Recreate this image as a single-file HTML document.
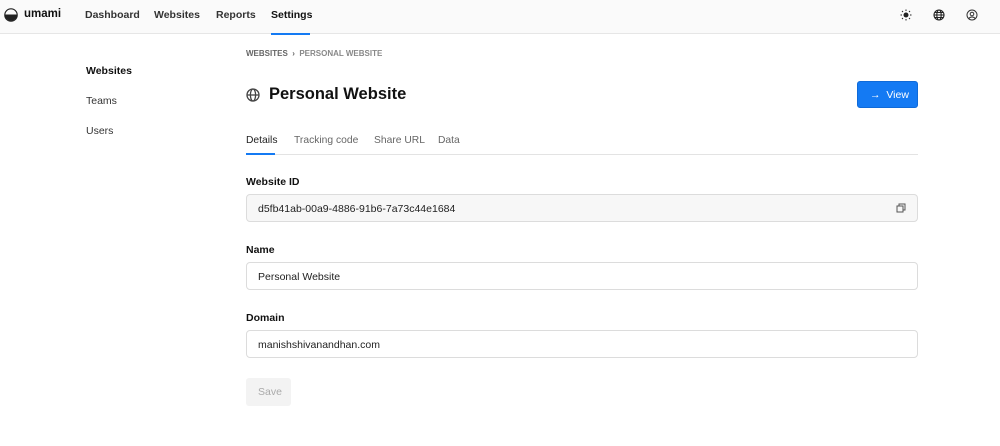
<!DOCTYPE html>
<html><head><style>
*{box-sizing:border-box;margin:0;padding:0}
body{width:1000px;height:446px;background:#fff;font-family:"Liberation Sans",sans-serif;color:#222;position:relative;overflow:hidden}
.hdr{position:absolute;left:0;top:0;width:1000px;height:34px;background:#fafafa;border-bottom:1px solid #e6e6e6}
.a{position:absolute;white-space:nowrap}
.nav{font-size:10.5px;font-weight:bold;color:#333;top:9px}
.side{font-size:10.5px;color:#333;left:86px}
.lbl{font-size:10.5px;font-weight:bold;left:246px;color:#111}
.tab{font-size:10.3px;top:135px;color:#666}
.inp{position:absolute;left:246px;width:672px;height:28px;border:1px solid #dcdcdc;border-radius:4px;font-size:10.5px;padding:8px 11px;color:#222;background:#fff}
</style></head><body>
<div class="hdr"></div>
<svg class="a" style="left:4px;top:8px" width="14" height="14" viewBox="0 0 14 14"><circle cx="7" cy="7" r="6.2" fill="none" stroke="#222" stroke-width="1.2"/><path d="M0.8 6.5 A6.2 6.2 0 0 0 13.2 6.5Z" fill="#222"/></svg>
<div class="a nav" style="left:24px;color:#111;font-size:11.5px;top:8px">umami</div>
<div class="a nav" style="left:85px">Dashboard</div>
<div class="a nav" style="left:154px">Websites</div>
<div class="a nav" style="left:216px">Reports</div>
<div class="a nav" style="left:271px;color:#111">Settings</div>
<div class="a" style="left:271px;top:33px;width:39px;height:2px;background:#147af3"></div>
<svg class="a" style="left:900px;top:9px" width="12" height="12" viewBox="0 0 12 12"><circle cx="6" cy="6" r="2.5" fill="#222"/><g stroke="#222" stroke-width="1"><path d="M6 0.5v1.5M6 10v1.5M0.5 6h1.5M10 6h1.5M2 2l1 1M9 9l1 1M2 10l1-1M9 3l1-1"/></g></svg>
<svg class="a" style="left:933px;top:9px" width="12" height="12" viewBox="0 0 12 12" fill="none" stroke="#222" stroke-width="1.1"><circle cx="6" cy="6" r="5"/><ellipse cx="6" cy="6" rx="2.2" ry="5"/><path d="M1 6h10M1.8 3.5h8.4M1.8 8.5h8.4"/></svg>
<svg class="a" style="left:966px;top:9px" width="12" height="12" viewBox="0 0 12 12" fill="none" stroke="#333" stroke-width="1"><circle cx="6" cy="6" r="5"/><circle cx="6" cy="5" r="1.8"/><path d="M2.8 9.5c1.5-2 4.9-2 6.4 0"/></svg>
<div class="a side" style="top:65px;font-weight:bold;color:#111">Websites</div>
<div class="a side" style="top:95px">Teams</div>
<div class="a side" style="top:125px">Users</div>
<div class="a" style="left:246px;top:49px;font-size:8px;font-weight:bold;color:#666">WEBSITES &nbsp;›&nbsp; <span style="color:#888">PERSONAL WEBSITE</span></div>
<svg class="a" style="left:246px;top:88px" width="14" height="14" viewBox="0 0 14 14" fill="none" stroke="#444" stroke-width="1.3"><circle cx="7" cy="7" r="6"/><ellipse cx="7" cy="7" rx="2.6" ry="6"/><path d="M1 7h12"/></svg>
<div class="a" style="left:269px;top:85px;font-size:16.5px;font-weight:bold;color:#111">Personal Website</div>
<div class="a" style="left:857px;top:81px;width:61px;height:27px;background:#147af3;border-radius:3px;border:1px solid #0f6ad8;color:#fff;font-size:10.5px;padding-top:7px;padding-left:12px">→&nbsp; View</div>
<div class="a" style="left:246px;top:154px;width:672px;height:1px;background:#e3e3e3"></div>
<div class="a tab" style="left:246px;color:#222">Details</div>
<div class="a" style="left:246px;top:153px;width:29px;height:2px;background:#147af3"></div>
<div class="a tab" style="left:294px">Tracking code</div>
<div class="a tab" style="left:374px">Share URL</div>
<div class="a tab" style="left:438px">Data</div>
<div class="a lbl" style="top:176px">Website ID</div>
<div class="inp" style="top:194px;background:#f7f7f7">d5fb41ab-00a9-4886-91b6-7a73c44e1684</div>
<svg class="a" style="left:896px;top:203px" width="10" height="10" viewBox="0 0 10 10" fill="none" stroke="#555" stroke-width="1"><rect x="1" y="3" width="6" height="6"/><path d="M3 3V1h6v6H7"/></svg>
<div class="a lbl" style="top:244px">Name</div>
<div class="inp" style="top:262px">Personal Website</div>
<div class="a lbl" style="top:312px">Domain</div>
<div class="inp" style="top:330px">manishshivanandhan.com</div>
<div class="a" style="left:246px;top:378px;width:45px;height:28px;background:#f3f3f3;border-radius:3px;color:#aaa;font-size:10.5px;padding:8px 0 0 12px">Save</div>
</body></html>
